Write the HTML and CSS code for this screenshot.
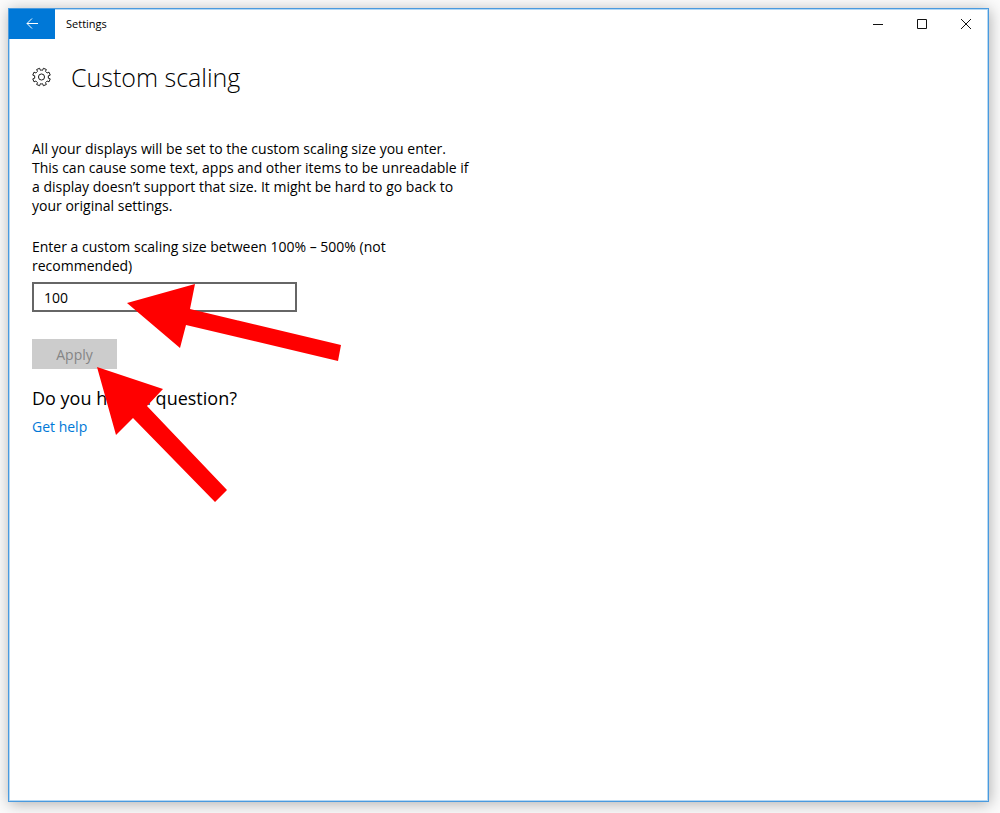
FILE: index.html
```html
<!DOCTYPE html>
<html lang="en">
<head>
  <meta charset="UTF-8" />
  <meta name="viewport" content="width=device-width, initial-scale=1.0"/>
  <title>Settings</title>
  <link rel="stylesheet" href="styles.css">
</head>
<body>
  <div class="window">
    <header class="titlebar">
      <button class="back" aria-label="Back">
        <svg width="14" height="14" viewBox="0 0 14 14"><path d="M13 6.5H2M7 1.5L2 6.5l5 5"/></svg>
      </button>
      <span class="app-name">Settings</span>
      <div class="controls">
        <button aria-label="Minimize"><svg width="12" height="12" viewBox="0 0 12 12"><path d="M1 6.5h10"/></svg></button>
        <button aria-label="Maximize"><svg width="12" height="12" viewBox="0 0 12 12"><path d="M1.5 1.5h9v9h-9z"/></svg></button>
        <button aria-label="Close"><svg width="12" height="12" viewBox="0 0 12 12"><path d="M1 1l10 10M11 1L1 11"/></svg></button>
      </div>
    </header>

    <main class="content">
      <div class="heading">
        <svg class="gear" width="19" height="20" viewBox="-10 -10 20 20">
          <path d="M1.2-7.1L2-9.2L5.1-7.9L4.2-5.9Q5.2-5.2 5.9-4.2L7.9-5.1L9.2-2L7.1-1.2Q7.4 0 7.1 1.2L9.2 2L7.9 5.1L5.9 4.2Q5.2 5.2 4.2 5.9L5.1 7.9L2 9.2L1.2 7.1Q0 7.4-1.2 7.1L-2 9.2L-5.1 7.9L-4.2 5.9Q-5.2 5.2-5.9 4.2L-7.9 5.1L-9.2 2L-7.1 1.2Q-7.4 0-7.1-1.2L-9.2-2L-7.9-5.1L-5.9-4.2Q-5.2-5.2-4.2-5.9L-5.1-7.9L-2-9.2L-1.2-7.1Q0-7.4 1.2-7.1z"/>
          <circle r="3.2"/>
        </svg>
        <h1>Custom scaling</h1>
      </div>

      <p>All your displays will be set to the custom scaling size you enter.<br>
        This can cause some text, apps and other items to be unreadable if<br>
        a display doesn’t support that size. It might be hard to go back to<br>
        your original settings.</p>

      <label for="scale">Enter a custom scaling size between 100% – 500% (not<br>
        recommended)</label>
      <input type="text" id="scale" value="100"/>
      <button class="apply" disabled>Apply</button>

      <h2>Do you have a question?</h2>
      <a href="#">Get help</a>
    </main>

    <svg class="arrows" width="340" height="500" viewBox="9 9 340 500">
      <path d="M127 303L195 284L190 309L341 345L338 361L186 325L180 348z"/>
      <path d="M97 367L163 389L147 406L227 490L215 502L133 418L116 435z"/>
    </svg>
  </div>
</body>
</html>
```

FILE: styles.css
```css
* {
  box-sizing: border-box;
}
body {
  margin: 0;
  min-height: 100vh;
  display: flex;
  padding: 8px 11px 11px 8px;
  font-family: "Open Sans", "Noto Sans", sans-serif;
  font-size: 14px;
  line-height: 19px;
  color: #000;
  background: #fbfbfb;
}
.window {
  position: relative;
  flex: 1;
  background: #fff;
  border: 1px solid #4a9ade;
  box-shadow: inset 0 0 0 1px #b4d8f4, 1px 2px 14px rgba(0, 0, 0, 0.3);
}
button {
  border: 0;
  padding: 0;
  font: inherit;
  background: none;
}
svg {
  display: block;
  fill: none;
  stroke: #111;
}
.titlebar {
  display: flex;
  align-items: center;
  height: 30px;
}
.back {
  display: flex;
  align-items: center;
  justify-content: center;
  width: 46px;
  height: 30px;
  background: #0078d7;
}
.back svg {
  stroke: #fff;
}
.app-name {
  margin-left: 11px;
  padding-bottom: 2px;
  font-size: 11px;
}
.controls {
  display: flex;
  margin-left: auto;
}
.controls button {
  display: flex;
  align-items: center;
  justify-content: center;
  width: 44px;
  height: 30px;
}
.content {
  padding: 20px 23px;
}
.heading {
  display: flex;
  align-items: center;
  gap: 20px;
  height: 36px;
  margin-bottom: 44px;
}
h1 {
  margin: 0;
  font-size: 25px;
  font-weight: 300;
}
p {
  margin: 0 0 22px;
}
label {
  display: block;
  margin-bottom: 7px;
}
input {
  display: block;
  width: 265px;
  height: 30px;
  padding: 0 10px;
  border: 2px solid #666;
  font: inherit;
  color: inherit;
  background: #fff;
}
.apply {
  display: block;
  width: 85px;
  height: 30px;
  margin: 27px 0 18px;
  color: #858585;
  background: #ccc;
}
h2 {
  margin: 0 0 8px;
  font-size: 18px;
  font-weight: 400;
  line-height: 22px;
}
a {
  color: #0078d7;
  text-decoration: none;
}
.arrows {
  position: absolute;
  top: 0;
  left: 0;
  pointer-events: none;
}
.arrows path {
  fill: #f00;
  stroke: none;
}
```
